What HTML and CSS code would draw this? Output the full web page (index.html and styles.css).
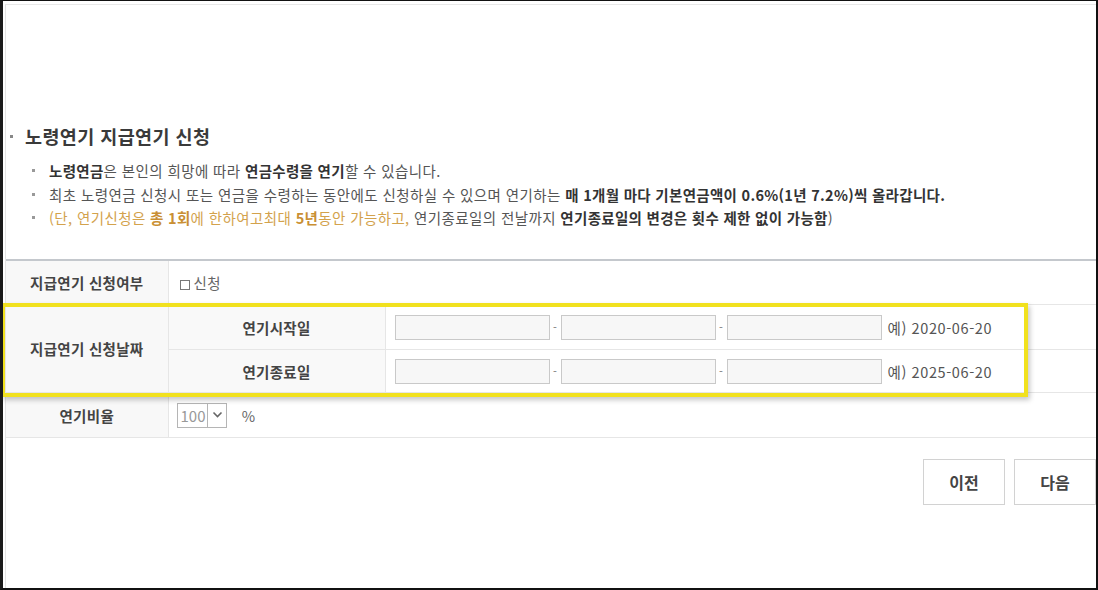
FILE: index.html
```html
<!DOCTYPE html>
<html lang="ko">
<head>
<meta charset="utf-8">
<title>노령연기 지급연기 신청</title>
<link rel="stylesheet" href="styles.css">
</head>
<body>
<div class="screen">
  <div class="page">
    <div class="section">
      <h2 class="title"><span class="dot"></span>노령연기 지급연기 신청</h2>
      <ul class="notes">
        <li><b>노령연금</b>은 본인의 희망에 따라 <b>연금수령을 연기</b>할 수 있습니다.</li>
        <li>최초 노령연금 신청시 또는 연금을 수령하는 동안에도 신청하실 수 있으며 연기하는 <b>매 1개월 마다 기본연금액이 0.6%(1년 7.2%)씩 올라갑니다.</b></li>
        <li><span class="warn">(단, 연기신청은 <b>총 1회</b>에 한하여고최대 <b>5년</b>동안 가능하고,</span> 연기종료일의 전날까지 <b>연기종료일의 변경은 횟수 제한 없이 가능함</b>)</li>
      </ul>
    </div>

    <table class="form">
      <colgroup>
        <col class="c1"><col class="c2"><col class="c3">
      </colgroup>
      <tr>
        <th>지급연기 신청여부</th>
        <td colspan="2" class="val"><span class="chk"></span>신청</td>
      </tr>
      <tr>
        <th rowspan="2">지급연기 신청날짜</th>
        <th class="sub">연기시작일</th>
        <td class="val">
          <div class="dates"><span class="inp"></span><span class="dash">-</span><span class="inp"></span><span class="dash">-</span><span class="inp"></span><span class="ex">예) 2020-06-20</span></div>
        </td>
      </tr>
      <tr class="short">
        <th class="sub">연기종료일</th>
        <td class="val">
          <div class="dates"><span class="inp"></span><span class="dash">-</span><span class="inp"></span><span class="dash">-</span><span class="inp"></span><span class="ex">예) 2025-06-20</span></div>
        </td>
      </tr>
      <tr>
        <th>연기비율</th>
        <td colspan="2" class="val">
          <span class="select"><span class="sv">100</span><span class="arrow"><svg width="11" height="8" viewBox="0 0 11 8"><path d="M1.5 1.5 L5.5 5.5 L9.5 1.5" fill="none" stroke="#666" stroke-width="1.6"/></svg></span></span>
          <span class="pct">%</span>
        </td>
      </tr>
    </table>

    <div class="buttons">
      <button class="btn">이전</button>
      <button class="btn">다음</button>
    </div>
  </div>
  <div class="highlight"></div>
</div>
</body>
</html>
```

FILE: styles.css
```css
* { box-sizing: border-box; }
html, body { margin: 0; padding: 0; background: #fff; }
body {
  font-family: "Noto Sans CJK KR", "Noto Sans", "Liberation Sans", sans-serif;
  color: #444;
}
.screen {
  position: relative;
  width: 1098px;
  height: 590px;
  overflow: hidden;
  border-top: 1px solid #111;
  border-left: 3px solid #1a1a1a;
  border-right: 2px solid #111;
  border-bottom: 2px solid #111;
  background: #fff;
}
.page {
  margin: 3px 0 0 2px;
  height: calc(100% - 3px);
  border-top: 1px solid #e8e8e8;
  border-left: 1px solid #e4e4e4;
}
.section { padding: 118px 0 0 4px; }
.title {
  display: flex;
  align-items: center;
  margin: 0;
  font-size: 18.5px;
  line-height: 26px;
  font-weight: 700;
  color: #3a3a3a;
  letter-spacing: 0.4px;
}
.dot {
  width: 3px; height: 3px;
  background: #888;
  margin: 0 12px 0 0;
}
.notes {
  list-style: none;
  margin: 10px 0 0 0;
  padding: 0 0 0 22px;
  font-size: 14.5px;
  line-height: 23.5px;
  color: #555;
  letter-spacing: 0.4px;
}
.notes li {
  display: block;
  position: relative;
  padding-left: 17px;
  white-space: nowrap;
}
.notes li::before {
  content: "";
  position: absolute;
  left: 0; top: 10px;
  width: 3px; height: 3px;
  background: #999;
}
.notes b { color: #333; font-weight: 700; letter-spacing: 0.3px; }
.warn { color: #d3a24c; }
.warn b { color: #c98f33; }

.form {
  width: 100%;
  margin-top: 29px;
  border-collapse: collapse;
  border-top: 2px solid #c4c8cd;
  border-bottom: 1px solid #cfcfcf;
  font-size: 14.5px;
  letter-spacing: 0.3px;
}
.c1 { width: 162px; }
.c2 { width: 217px; }
.form th, .form td {
  height: 45px;
  padding: 0;
  border-bottom: 1px solid #e6e6e6;
}
.form tr.short th, .form tr.short td { height: 43px; }
.form th {
  background: #f8f8f8;
  font-weight: 700;
  color: #444;
  text-align: center;
  border-right: 1px solid #e6e6e6;
}
.form th.sub { background: #f9f9f9; }
.form td.val { padding-left: 9px; color: #666; }
.chk {
  display: inline-block;
  width: 10px; height: 10px;
  border: 1px solid #777;
  margin: 0 4px 0 2px;
  vertical-align: -1px;
}
.dates { display: flex; align-items: center; }
.inp {
  width: 155px; height: 25px;
  border: 1px solid #c9c9c9;
  background: #f7f7f7;
}
.dash { width: 11px; text-align: center; font-size: 11px; color: #777; }
.ex { margin-left: 6px; color: #555; font-size: 14.5px; letter-spacing: 0.6px; }
.select {
  display: inline-flex;
  align-items: stretch;
  height: 25px;
  border: 1px solid #b5b5b5;
  vertical-align: middle;
  margin-left: -1px;
}
.sv { padding: 0 2px 0 3px; line-height: 23px; color: #999; font-size: 15px; letter-spacing: 0; }
.arrow {
  width: 19px;
  border-left: 1px solid #b5b5b5;
  display: flex; align-items: center; justify-content: center;
}
.pct { margin-left: 10px; color: #666; vertical-align: middle; }

.buttons {
  display: flex;
  justify-content: flex-end;
  gap: 9px;
  margin-top: 21px;
}
.btn {
  width: 82px; height: 46px;
  background: #fff;
  border: 1px solid #d2d2d2;
  font-family: inherit;
  font-size: 16px;
  font-weight: 700;
  color: #444;
  padding: 0;
}
.highlight {
  position: absolute;
  left: -2px;
  top: 302px;
  width: 1027px;
  height: 94px;
  border: 4px solid #f1e11e;
  box-shadow: 2px 3px 5px rgba(0,0,0,0.22);
  pointer-events: none;
}
```
